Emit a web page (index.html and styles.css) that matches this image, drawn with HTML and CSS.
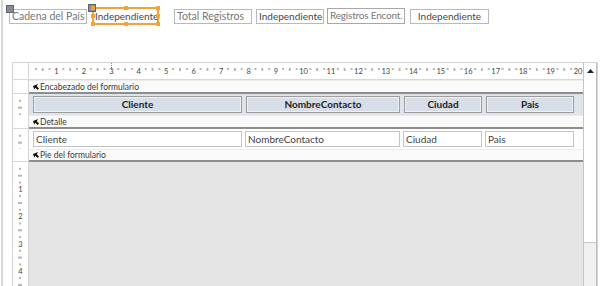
FILE: index.html
```html
<!DOCTYPE html>
<html lang="es">
<head>
    <meta charset="UTF-8">
    <title>Diseño de formulario</title>
    <link rel="stylesheet" href="styles.css">
</head>
<body>
    <div class="page">
        <div class="toolbar">
            <div class="ctl caption c1">Cadena del País<span class="grip"></span></div>
            <div class="ctl value selected c2">Independiente
                <span class="grip"></span>
                <span class="h tl"></span><span class="h tc"></span><span class="h tr"></span>
                <span class="h ml"></span><span class="h mr"></span>
                <span class="h bl"></span><span class="h bc"></span><span class="h br"></span>
            </div>
            <div class="ctl caption c3">Total Registros</div>
            <div class="ctl value c4">Independiente</div>
            <div class="ctl caption c5">Registros Encont.</div>
            <div class="ctl value c6">Independiente</div>
        </div>

        <div class="designer">
            <div class="main">
                <div class="row ruler-row">
                    <div class="vcell corner"></div>
                    <svg class="hruler" width="554" height="16">
                        <defs>
                            <pattern id="hticks" width="27.45" height="16" patternUnits="userSpaceOnUse">
                                <rect x="6.4" y="5" width="1" height="2" fill="#707070"/>
                                <rect x="13.2" y="5" width="1" height="3" fill="#707070"/>
                                <rect x="20.1" y="5" width="1" height="2" fill="#707070"/>
                            </pattern>
                        </defs>
                        <rect width="554" height="16" fill="url(#hticks)"/>
                        <line x1="82.5" y1="0" x2="82.5" y2="8" stroke="#888" stroke-dasharray="1 1"/>
                        <text x="27.45" y="11">1</text>
                        <text x="54.9" y="11">2</text>
                        <text x="82.35" y="11">3</text>
                        <text x="109.8" y="11">4</text>
                        <text x="137.25" y="11">5</text>
                        <text x="164.7" y="11">6</text>
                        <text x="192.15" y="11">7</text>
                        <text x="219.6" y="11">8</text>
                        <text x="247.05" y="11">9</text>
                        <text x="274.5" y="11">10</text>
                        <text x="301.95" y="11">11</text>
                        <text x="329.4" y="11">12</text>
                        <text x="356.85" y="11">13</text>
                        <text x="384.3" y="11">14</text>
                        <text x="411.75" y="11">15</text>
                        <text x="439.2" y="11">16</text>
                        <text x="466.65" y="11">17</text>
                        <text x="494.1" y="11">18</text>
                        <text x="521.55" y="11">19</text>
                        <text x="549" y="11">20</text>
                    </svg>
                </div>

                <div class="row bar">
                    <div class="vcell"></div>
                    <div class="bar-label">
                        <svg class="sel" width="6" height="6" viewBox="0 0 6 6"><path d="M0 2 L5 0 L3.8 2.2 L6 4.6 L4.6 6 L2.4 3.8 L1.2 5.6 Z" fill="#111"/></svg>
                        Encabezado del formulario
                    </div>
                </div>
                <div class="row section header">
                    <div class="vcell">
                        <svg class="vruler" width="15" height="21"><rect width="15" height="21" fill="url(#vticks)"/></svg>
                    </div>
                    <div class="fields">
                        <div class="lbl w1">Cliente</div>
                        <div class="lbl w2">NombreContacto</div>
                        <div class="lbl w3">Ciudad</div>
                        <div class="lbl w4">Pais</div>
                    </div>
                </div>

                <div class="row bar">
                    <div class="vcell"></div>
                    <div class="bar-label">
                        <svg class="sel" width="6" height="6" viewBox="0 0 6 6"><path d="M0 2 L5 0 L3.8 2.2 L6 4.6 L4.6 6 L2.4 3.8 L1.2 5.6 Z" fill="#111"/></svg>
                        Detalle
                    </div>
                </div>
                <div class="row section detail">
                    <div class="vcell">
                        <svg class="vruler" width="15" height="20"><rect width="15" height="20" fill="url(#vticks)"/></svg>
                    </div>
                    <div class="fields boxes">
                        <div class="txt w1">Cliente</div>
                        <div class="txt w2">NombreContacto</div>
                        <div class="txt w3">Ciudad</div>
                        <div class="txt w4">Pais</div>
                    </div>
                </div>

                <div class="row bar short">
                    <div class="vcell"></div>
                    <div class="bar-label">
                        <svg class="sel" width="6" height="6" viewBox="0 0 6 6"><path d="M0 2 L5 0 L3.8 2.2 L6 4.6 L4.6 6 L2.4 3.8 L1.2 5.6 Z" fill="#111"/></svg>
                        Pie del formulario
                    </div>
                </div>
                <div class="row rest">
                    <div class="vcell">
                        <svg class="vruler" width="15" height="130">
                            <defs>
                                <pattern id="vticks" width="15" height="27.3" patternUnits="userSpaceOnUse">
                                    <rect x="6" y="6.3" width="2" height="1" fill="#707070"/>
                                    <rect x="5" y="13.2" width="4" height="1" fill="#707070"/>
                                    <rect x="6" y="20" width="2" height="1" fill="#707070"/>
                                </pattern>
                            </defs>
                            <rect width="15" height="130" fill="url(#vticks)"/>
                            <text x="7.5" y="30">1</text>
                            <text x="7.5" y="57.3">2</text>
                            <text x="7.5" y="84.6">3</text>
                            <text x="7.5" y="111.9">4</text>
                        </svg>
                    </div>
                    <div class="gray"></div>
                </div>
            </div>

            <div class="vscroll">
                <div class="up">
                    <svg width="7" height="4" viewBox="0 0 7 4"><path d="M0 4 L3.5 0 L7 4 Z" fill="#222"/></svg>
                </div>
                <div class="thumb"></div>
                <div class="track"></div>
            </div>
        </div>
    </div>
</body>
</html>
```

FILE: styles.css
```css
body {
    margin: 0;
    background: #fff;
    font-family: Lato, 'Liberation Sans', sans-serif;
    color: #333;
}

.page {
    margin-left: 1px;
    border-left: 2px solid #d8d8d8;
    height: 286px;
    overflow: hidden;
}

/* top row of unbound controls */
.toolbar {
    display: flex;
    align-items: center;
    height: 18px;
    padding-top: 7px;
}

.ctl {
    position: relative;
    box-sizing: border-box;
    height: 15px;
    border: 1px solid #b9b9b9;
    font-size: 10.5px;
    line-height: 13px;
    padding: 0 2px;
    white-space: nowrap;
    color: #777;
}

.ctl.value {
    font-size: 10px;
    color: #484848;
    text-align: center;
}

.c1 { width: 78px; margin-left: 6px; }
.c2 { width: 67px; margin-left: 5px; height: 18px; line-height: 15px; }
.c3 { width: 78px; margin-left: 15px; }
.c4 { width: 68px; margin-left: 4px; }
.c5 { width: 78px; margin-left: 3px; height: 16px; border-color: #a8a8a8; font-size: 10px; letter-spacing: -0.2px; }
.c6 { width: 79px; margin-left: 5px; }

.ctl.selected {
    border: 2px solid #f4a23a;
    padding: 0 1px;
    text-align: left;
}

.grip {
    position: absolute;
    width: 6px;
    height: 6px;
    background: #858c94;
    border: 1px solid #5f666e;
    left: -4px;
    top: -5px;
}

.selected .grip {
    left: -6px;
    top: -5px;
}

.h {
    position: absolute;
    width: 4px;
    height: 4px;
    background: #f4a23a;
}

.tl { left: -3px; top: -3px; }
.tc { left: 30px; top: -3px; }
.tr { right: -3px; top: -3px; }
.ml { left: -3px; top: 5px; }
.mr { right: -3px; top: 5px; }
.bl { left: -3px; bottom: -3px; }
.bc { left: 30px; bottom: -3px; }
.br { right: -3px; bottom: -3px; }

/* design surface */
.designer {
    display: flex;
    margin-top: 37px;
    margin-left: 9px;
    width: 586px;
    box-sizing: border-box;
    height: 230px;
    border: 1px solid #d4d4d4;
    border-bottom: none;
}

.main {
    flex: 1;
    display: flex;
    flex-direction: column;
}

.row {
    display: flex;
    flex-shrink: 0;
}

.vcell {
    width: 15px;
    flex-shrink: 0;
    border-right: 1px solid #d4d4d4;
    background: #fff;
}

.ruler-row {
    height: 16px;
    border-bottom: 1px solid #d8d8d8;
}

.hruler text,
.vruler text {
    font-family: Lato, 'Liberation Sans', sans-serif;
    font-size: 7.5px;
    fill: #444;
    text-anchor: middle;
}

.bar {
    height: 14px;
}

.bar.short {
    height: 13px;
}

.bar .vcell {
    border-bottom: 1px solid #d8d8d8;
}

.bar-label {
    flex: 1;
    display: flex;
    align-items: center;
    gap: 1px;
    padding-left: 4px;
    background: #fafafa;
    border-top: 1px solid #ececec;
    border-bottom: 2px solid #8e8e8e;
    font-size: 8.5px;
    color: #3a3a3a;
}

.sel {
    flex-shrink: 0;
}

.section {
    height: 20px;
}

.section.header {
    height: 21px;
}

.header .fields {
    background: #dfe4eb;
}

.fields {
    flex: 1;
    display: flex;
    align-items: flex-start;
    gap: 4px;
    padding-left: 4px;
    padding-top: 2px;
}

.lbl {
    box-sizing: border-box;
    height: 17px;
    border: 1px solid #9c9c9c;
    box-shadow: inset 0 0 0 1px #eef1f5;
    background: #d8dee7;
    font-size: 10px;
    font-weight: bold;
    line-height: 15px;
    text-align: center;
    color: #1e1e1e;
}

.w1 { width: 209px; }
.w2 { width: 154px; }
.w3 { width: 78px; }
.w4 { width: 88px; }

.boxes {
    gap: 3px;
    padding-top: 2px;
}

.boxes .w2 { width: 155px; }
.boxes .w3 { width: 79px; }
.boxes .w4 { width: 89px; }

.txt {
    box-sizing: border-box;
    height: 16px;
    border: 1px solid #c4c4c4;
    background: #fff;
    font-size: 10px;
    line-height: 14px;
    padding-left: 2px;
    color: #444;
}

.rest {
    flex: 1;
}

.gray {
    flex: 1;
    background: #e5e5e5;
}

/* vertical scroll bar */
.vscroll {
    width: 14px;
    display: flex;
    flex-direction: column;
    border-left: 1px solid #c6c6c6;
    border-right: 1px solid #bdbdbd;
}

.up {
    height: 15px;
    display: flex;
    align-items: center;
    justify-content: center;
}

.thumb {
    height: 164px;
    background: #fff;
    border-bottom: 1px solid #c6c6c6;
}

.track {
    flex: 1;
    background: #f0f0f0;
}
```
